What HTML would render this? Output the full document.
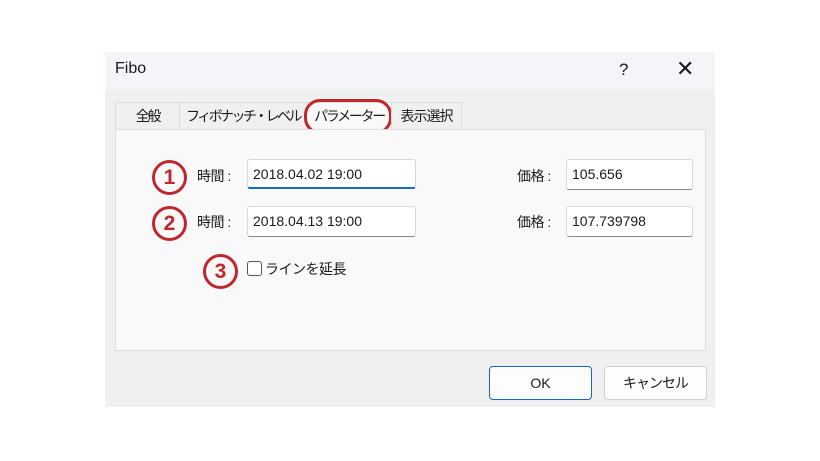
<!DOCTYPE html>
<html><head><meta charset="utf-8"><style>
body{margin:0;width:820px;height:461px;background:#fff;position:relative;overflow:hidden;font-family:"Liberation Sans","Noto Sans CJK JP",sans-serif;color:#1a1a1a}
.a{position:absolute}
.dlg{left:105px;top:52px;width:610px;height:355px;background:#f0f0f0}
.title{left:105px;top:52px;width:610px;height:38px;background:#f3f5f9}
.tab{top:102px;height:27px;font-size:14px;line-height:27px;text-align:center;background:#f0f0f0;border:1px solid #dcdcdc;border-bottom:none;white-space:nowrap;letter-spacing:-2.3px;overflow:hidden}
.panel{left:115px;top:129px;width:591px;height:222px;background:#f9f9f9;border:1px solid #dcdcdc;box-sizing:border-box}
.inp{background:#fff;border:1px solid #d8d8d8;border-bottom:1px solid #8a8a8a;box-sizing:border-box;font-size:14px;padding-left:5px;line-height:28px;border-radius:3px}
.lbl{font-size:14px;letter-spacing:-0.5px}
.num{width:29px;height:29px;border:3px solid #c0272d;border-radius:50%;color:#c0272d;font-weight:bold;font-size:21px;text-align:center;line-height:29px}
.btn{top:366px;height:34px;width:103px;background:#fdfdfd;border:1px solid #d0d0d0;border-radius:4px;box-sizing:border-box;font-size:14px;text-align:center;line-height:32px}
</style></head><body>
<div class="a dlg"></div>
<div class="a title"></div>
<div class="a" style="left:115px;top:60px;font-size:16px">Fibo</div>
<div class="a" style="left:619px;top:60px;font-size:17px">?</div>
<div class="a" style="left:676px;top:56px;font-size:22px;font-weight:300">✕</div>
<div class="a tab" style="left:115px;width:63px">全般</div>
<div class="a tab" style="left:179px;width:126px;letter-spacing:-2.6px">フィボナッチ・レベル</div>
<div class="a tab" style="left:306px;width:84px;background:#f9f9f9;height:28px">パラメーター</div>
<div class="a" style="left:304px;top:99px;width:82px;height:29px;border:3px solid #c0272d;border-radius:16px"></div>
<div class="a tab" style="left:391px;width:69px;letter-spacing:-1px">表示選択</div>
<div class="a panel"></div>
<div class="a num" style="left:152px;top:160px">1</div>
<div class="a num" style="left:152px;top:206px">2</div>
<div class="a num" style="left:203px;top:254px">3</div>
<div class="a lbl" style="left:197px;top:166px">時間 :</div>
<div class="a lbl" style="left:197px;top:212px">時間 :</div>
<div class="a inp" style="left:247px;top:159px;width:169px;height:30px;border-bottom:2px solid #1a66c4">2018.04.02 19:00</div>
<div class="a inp" style="left:247px;top:206px;width:169px;height:31px">2018.04.13 19:00</div>
<div class="a lbl" style="left:517px;top:166px">価格 :</div>
<div class="a lbl" style="left:517px;top:212px">価格 :</div>
<div class="a inp" style="left:566px;top:159px;width:127px;height:31px">105.656</div>
<div class="a inp" style="left:566px;top:206px;width:127px;height:31px">107.739798</div>
<div class="a" style="left:247px;top:261px;width:13px;height:13px;border:1px solid #555;border-radius:3px;background:#fff"></div>
<div class="a lbl" style="left:265px;top:259px">ラインを延長</div>
<div class="a btn" style="left:489px;border:1px solid #1a66c4">OK</div>
<div class="a btn" style="left:604px;letter-spacing:-1px">キャンセル</div>
</body></html>
